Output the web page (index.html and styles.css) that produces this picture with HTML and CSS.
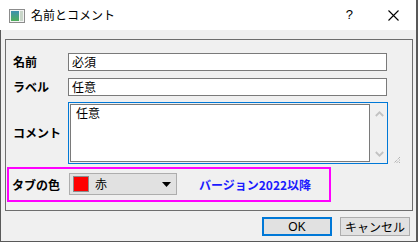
FILE: index.html
```html
<!DOCTYPE html>
<html lang="ja">
<head>
<meta charset="utf-8">
<link rel="stylesheet" href="styles.css">
</head>
<body>
<div class="win">
  <div class="titlebar">
    <svg class="appicon" width="16" height="14" viewBox="0 0 16 14">
      <defs>
        <linearGradient id="g1" x1="0" y1="0" x2="0" y2="1">
          <stop offset="0" stop-color="#3d8fb0"/>
          <stop offset="1" stop-color="#4fae5a"/>
        </linearGradient>
      </defs>
      <rect x="0.5" y="0.5" width="15" height="13" fill="#f4f4f4" stroke="#8c8c8c"/>
      <rect x="2" y="2" width="8" height="10" fill="url(#g1)"/>
      <rect x="11" y="2" width="3" height="10" fill="#c9d6c9"/>
    </svg>
    <span class="title">名前とコメント</span>
    <span class="help">?</span>
    <svg class="close" width="11" height="11" viewBox="0 0 11 11">
      <path d="M0.5 0.5 L10.5 10.5 M10.5 0.5 L0.5 10.5" stroke="#000" stroke-width="1.1" fill="none"/>
    </svg>
  </div>
  <div class="body">
    <div class="group">
      <div class="row">
        <span class="lbl">名前</span>
        <div class="input">必須</div>
      </div>
      <div class="row">
        <span class="lbl">ラベル</span>
        <div class="input">任意</div>
      </div>
      <div class="row row-memo">
        <span class="lbl">コメント</span>
        <div class="memo">
          <div class="memo-text">任意</div>
          <div class="vscroll">
            <svg width="9" height="6" viewBox="0 0 9 6"><path d="M0.8 5 L4.5 1.3 L8.2 5" stroke="#c2c2c2" stroke-width="1.8" fill="none"/></svg>
            <svg width="9" height="6" viewBox="0 0 9 6"><path d="M0.8 1 L4.5 4.7 L8.2 1" stroke="#c2c2c2" stroke-width="1.8" fill="none"/></svg>
          </div>
        </div>
        <svg class="grip" width="8" height="8" viewBox="0 0 8 8">
          <path d="M7 1 L1 7 M7 3.5 L3.5 7 M7 6 L6 7" stroke="#9a9a9a" stroke-width="1" stroke-dasharray="1 1" fill="none"/>
        </svg>
      </div>
      <div class="hl">
        <span class="lbl2">タブの色</span>
        <div class="combo">
          <span class="swatch"></span>
          <span class="combo-text">赤</span>
          <svg class="arrow" width="9" height="5" viewBox="0 0 9 5"><path d="M0 0 H9 L4.5 5 Z" fill="#000"/></svg>
        </div>
        <span class="note">バージョン2022以降</span>
      </div>
    </div>
    <div class="buttons">
      <div class="btn btn-default">OK</div>
      <div class="btn">キャンセル</div>
    </div>
  </div>
</div>
</body>
</html>
```
FILE: styles.css
```css
* { box-sizing: border-box; }
html, body { margin: 0; padding: 0; }
body {
  font-family: "Noto Sans CJK JP", "Liberation Sans", sans-serif;
  font-size: 12px;
  color: #000;
}
.win {
  width: 418px;
  height: 242px;
  display: flex;
  flex-direction: column;
  background: #f0f0f0;
  border-right: 2px solid #595959;
}
.titlebar {
  height: 30px;
  flex: none;
  background: #fff;
  display: flex;
  align-items: center;
  padding-left: 9px;
}
.appicon { flex: none; margin-top: 1px; }
.title {
  margin-left: 6px;
  line-height: 16px;
  font-size: 12px;
}
.help {
  margin-left: auto;
  font-family: "Liberation Sans", sans-serif;
  font-size: 13px;
  line-height: 16px;
}
.close {
  margin-left: 35px;
  margin-right: 17px;
}
.body {
  flex: 1;
  display: flex;
  flex-direction: column;
  border-left: 1px solid #595959;
  border-bottom: 1px solid #595959;
  padding: 9px 3px 0 4px;
}
.group {
  border: 1px solid #6e6e6e;
  padding: 13px 0 8px 1px;
  display: flex;
  flex-direction: column;
}
.row {
  display: flex;
  align-items: center;
  padding-left: 6px;
}
.row + .row { margin-top: 7px; }
.row-memo { margin-top: 6px !important; align-items: center; }
.lbl {
  width: 55px;
  flex: none;
  font-weight: bold;
  line-height: 16px;
}
.input {
  width: 319px;
  height: 18px;
  background: #fff;
  border: 1px solid #7a7a7a;
  padding-left: 3px;
  line-height: 16px;
}
.memo {
  width: 320px;
  height: 62px;
  border: 1px solid #0078d7;
  background: #f0f0f0;
  display: flex;
  padding: 1px 0 1px 1px;
}
.memo-text {
  flex: 1;
  background: #fff;
  border: 1px solid #7a7a7a;
  padding: 1px 0 0 5px;
  line-height: 14px;
}
.vscroll {
  width: 17px;
  flex: none;
  display: flex;
  flex-direction: column;
  justify-content: space-between;
  align-items: center;
  padding: 7px 0 5px 1px;
}
.grip {
  align-self: flex-end;
  margin-left: 5px;
}
.hl {
  margin-top: 3px;
  width: 324px;
  height: 35px;
  border: 2px solid #ff00ff;
  display: flex;
  align-items: center;
  padding: 0 0 0 3px;
}
.lbl2 {
  width: 57px;
  flex: none;
  font-weight: bold;
  line-height: 16px;
}
.combo {
  width: 108px;
  height: 22px;
  background: #e1e1e1;
  border: 1px solid #adadad;
  display: flex;
  align-items: center;
  padding-left: 3px;
  padding-right: 5px;
  margin-top: -2px;
}
.swatch {
  width: 16px;
  height: 16px;
  background: #ff0000;
  border: 1px solid #8c8c8c;
  flex: none;
}
.combo-text {
  margin-left: 6px;
  line-height: 16px;
}
.arrow { margin-left: auto; margin-top: 1px; }
.note {
  margin-left: 22px;
  color: #1a1aff;
  font-weight: bold;
  line-height: 16px;
}
.buttons {
  display: flex;
  justify-content: flex-end;
  padding-right: 3px;
  margin-top: 6px;
  gap: 8px;
}
.btn {
  width: 70px;
  height: 19px;
  background: #e1e1e1;
  border: 1px solid #adadad;
  display: flex;
  align-items: center;
  justify-content: center;
  line-height: 14px;
}
.btn-default {
  border: 2px solid #0078d7;
  font-family: "Liberation Sans", sans-serif;
}
```
